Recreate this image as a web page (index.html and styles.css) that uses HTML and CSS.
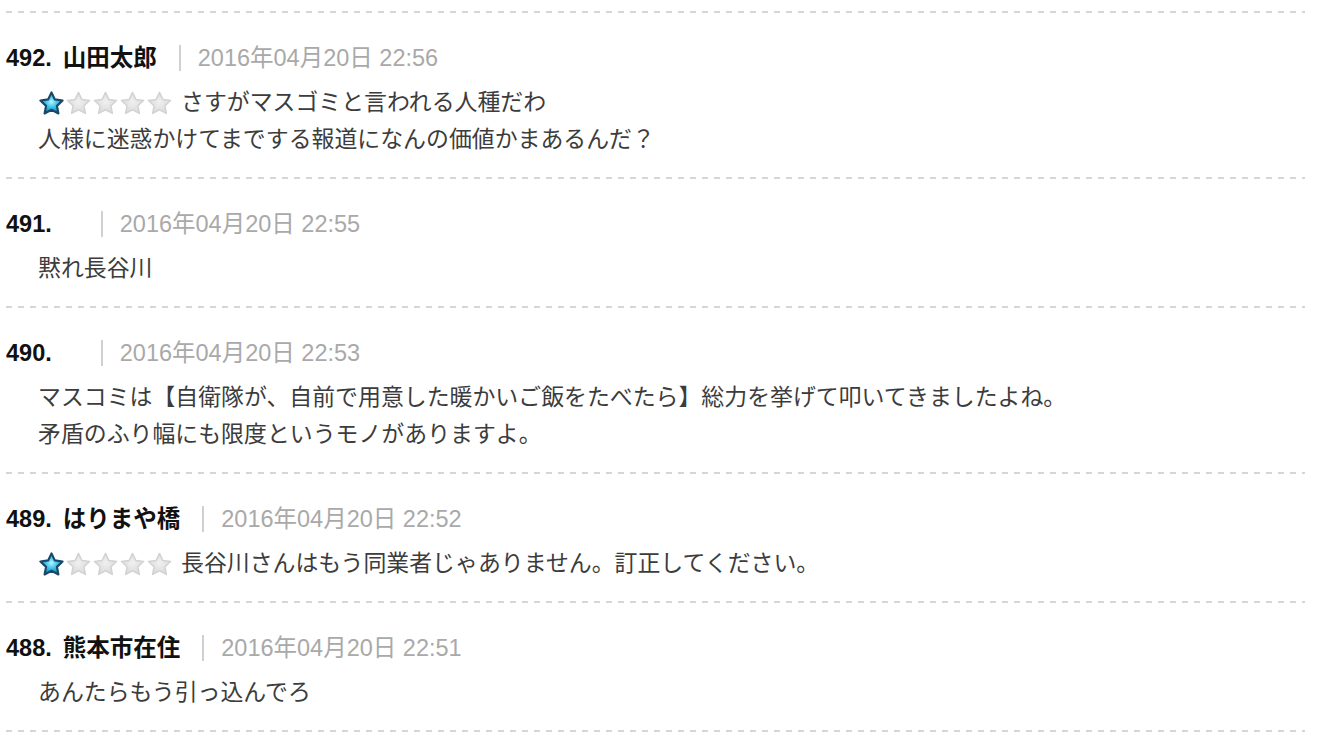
FILE: index.html
```html
<!DOCTYPE html>
<html lang="ja">
<head>
<meta charset="utf-8">
<title>コメント</title>
<link rel="stylesheet" href="styles.css">
</head>
<body>
<svg class="defs" width="0" height="0" aria-hidden="true">
  <defs>
    <radialGradient id="blue" cx="50%" cy="45%" r="55%">
      <stop offset="0" stop-color="#b8f4ff"/>
      <stop offset="0.45" stop-color="#3fc6ef"/>
      <stop offset="1" stop-color="#137fb0"/>
    </radialGradient>
    <radialGradient id="gray" cx="50%" cy="45%" r="55%">
      <stop offset="0" stop-color="#f0f0f0"/>
      <stop offset="1" stop-color="#d9d9d9"/>
    </radialGradient>
    <path id="star" d="M12 2.6l2.8 5.9 6.5.9-4.7 4.5 1.2 6.4L12 17.2l-5.8 3.1 1.2-6.4-4.7-4.5 6.5-.9z"/>
  </defs>
</svg>

<div class="comments">
  <div class="comment">
    <div class="head">
      <span class="num">492.</span><span class="name">山田太郎</span><span class="sep"></span><span class="date">2016年04月20日 22:56</span>
    </div>
    <div class="body">
      <p><span class="stars"><svg class="star on" viewBox="1.5 1.5 21 20"><use href="#star"/></svg><svg class="star" viewBox="1.5 1.5 21 20"><use href="#star"/></svg><svg class="star" viewBox="1.5 1.5 21 20"><use href="#star"/></svg><svg class="star" viewBox="1.5 1.5 21 20"><use href="#star"/></svg><svg class="star" viewBox="1.5 1.5 21 20"><use href="#star"/></svg></span>さすがマスゴミと言われる人種だわ</p>
      <p>人様に迷惑かけてまでする報道になんの価値かまあるんだ？</p>
    </div>
  </div>

  <div class="comment">
    <div class="head">
      <span class="num">491.</span><span class="name anon"></span><span class="sep"></span><span class="date">2016年04月20日 22:55</span>
    </div>
    <div class="body">
      <p>黙れ長谷川</p>
    </div>
  </div>

  <div class="comment">
    <div class="head">
      <span class="num">490.</span><span class="name anon"></span><span class="sep"></span><span class="date">2016年04月20日 22:53</span>
    </div>
    <div class="body">
      <p>マスコミは【自衛隊が、自前で用意した暖かいご飯をたべたら】総力を挙げて叩いてきましたよね。</p>
      <p>矛盾のふり幅にも限度というモノがありますよ。</p>
    </div>
  </div>

  <div class="comment">
    <div class="head">
      <span class="num">489.</span><span class="name">はりまや橋</span><span class="sep"></span><span class="date">2016年04月20日 22:52</span>
    </div>
    <div class="body">
      <p><span class="stars"><svg class="star on" viewBox="1.5 1.5 21 20"><use href="#star"/></svg><svg class="star" viewBox="1.5 1.5 21 20"><use href="#star"/></svg><svg class="star" viewBox="1.5 1.5 21 20"><use href="#star"/></svg><svg class="star" viewBox="1.5 1.5 21 20"><use href="#star"/></svg><svg class="star" viewBox="1.5 1.5 21 20"><use href="#star"/></svg></span>長谷川さんはもう同業者じゃありません。訂正してください。</p>
    </div>
  </div>

  <div class="comment">
    <div class="head">
      <span class="num">488.</span><span class="name">熊本市在住</span><span class="sep"></span><span class="date">2016年04月20日 22:51</span>
    </div>
    <div class="body">
      <p>あんたらもう引っ込んでろ</p>
    </div>
  </div>
</div>
</body>
</html>
```

FILE: styles.css
```css
html, body {
  margin: 0;
  padding: 0;
  background: #ffffff;
}

body {
  font-family: "Liberation Sans", "Noto Sans CJK JP", sans-serif;
  color: #3c3c3c;
}

.defs {
  position: absolute;
  width: 0;
  height: 0;
  overflow: hidden;
}

.comments {
  margin: 11px 0 0 6px;
  width: 1299px;
  background: repeating-linear-gradient(to right, #d6d6d6 0 6px, transparent 6px 12px) left bottom / 100% 2px no-repeat;
  padding-bottom: 2px;
}

.comment {
  padding: 32px 0 19px 0;
  background: repeating-linear-gradient(to right, #d6d6d6 0 6px, transparent 6px 12px) left top / 100% 2px no-repeat;
}

.head {
  display: flex;
  align-items: center;
  height: 30px;
  font-size: 23.5px;
  line-height: 30px;
}

.num {
  font-weight: bold;
  color: #111111;
}

.name {
  margin-left: 11px;
  font-weight: bold;
  color: #111111;
}

.name.anon {
  width: 16px;
}

.sep {
  width: 2px;
  height: 26px;
  margin-left: 22px;
  background: #d0d0d0;
}

.date {
  margin-left: 17px;
  color: #a9a9a9;
}

.body {
  margin-top: 11px;
  padding-left: 32px;
  font-size: 22.9px;
  line-height: 37px;
}

.body p {
  margin: 0;
  display: flex;
  align-items: center;
}

.stars {
  display: inline-flex;
  gap: 2px;
  margin-right: 9px;
  margin-left: 1px;
}

.star {
  width: 25px;
  height: 24px;
  fill: url(#gray);
  stroke: #d2d2d2;
  stroke-width: 1.2;
  stroke-linejoin: round;
}

.star.on {
  fill: url(#blue);
  stroke: #1b4866;
  stroke-width: 1.8;
}
```
